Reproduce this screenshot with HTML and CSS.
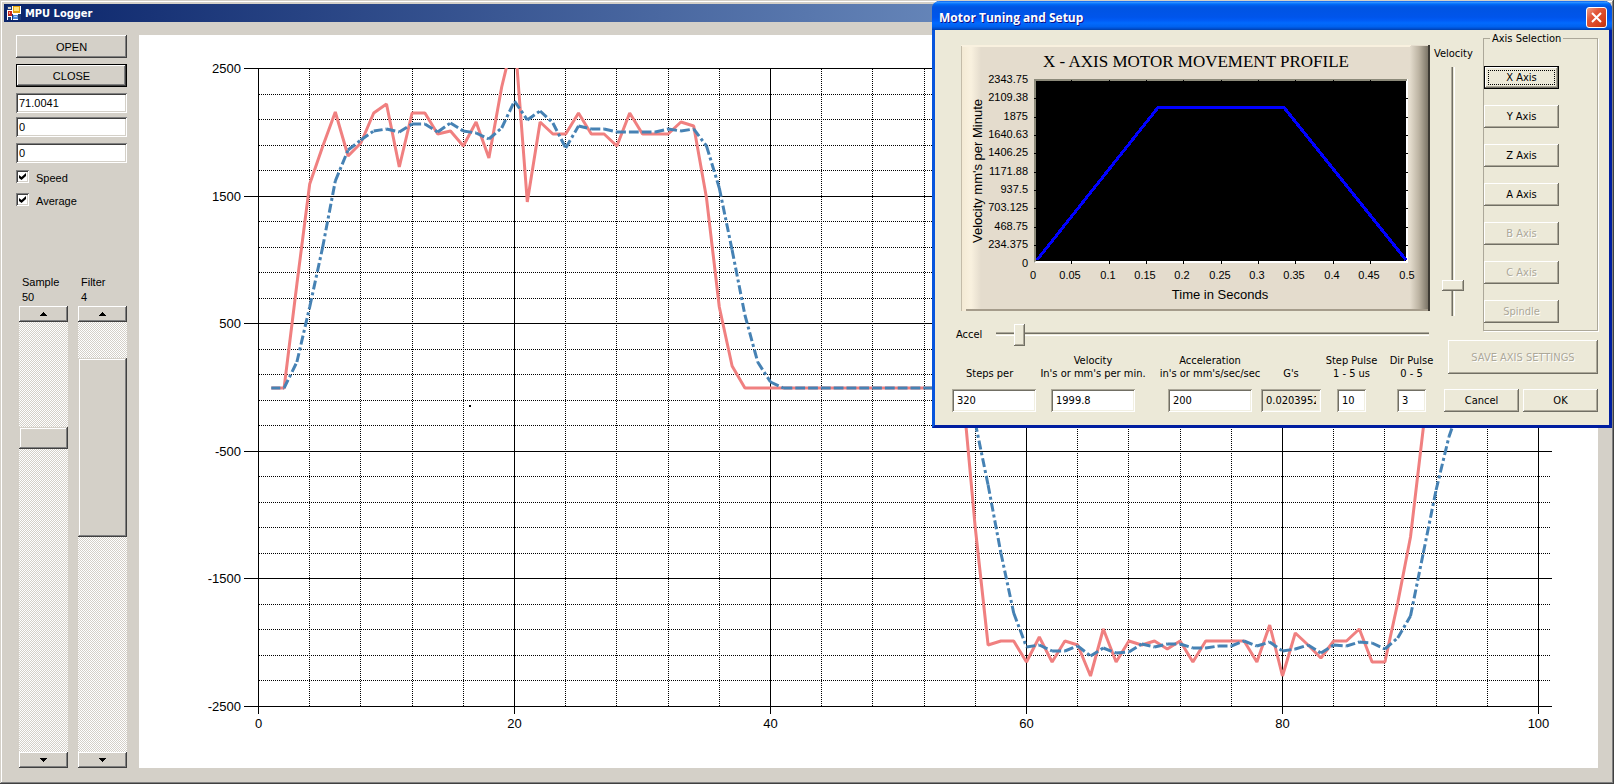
FILE: index.html
```
<!DOCTYPE html>
<html lang="en">
<head>
<meta charset="utf-8">
<title>MPU Logger</title>
<link rel="stylesheet" href="styles.css">
</head>
<body>
<div class="window">
  <header class="titlebar">
    <svg class="app-icon" viewBox="0 0 14 14" aria-hidden="true">
      <rect width="14" height="14" fill="#fff"/>
      <path d="M0 0h5v4H0zM1 11h3v3H1zM11 8h3v6h-3zM5 8h1v6H5z" fill="#1c3a78"/>
      <rect x="1" y="1" width="3" height="2" fill="#d4d0c8"/>
      <rect x="1" y="5" width="4" height="5" fill="#c8281e"/>
      <rect x="2" y="6" width="1" height="2" fill="#f0a08c"/>
      <rect x="6" y="0" width="7" height="7" fill="#e0a010"/>
      <rect x="7" y="1" width="5" height="4" fill="#ffe07a"/>
      <rect x="6" y="9" width="5" height="4" fill="#4a86dc"/>
      <rect x="7" y="10" width="3" height="1" fill="#a8ccf8"/>
    </svg>
    <h1>MPU Logger</h1>
  </header>
  <div class="workspace">
    <aside class="panel">
      <button class="btn" type="button">OPEN</button>
      <button class="btn btn-default" type="button">CLOSE</button>
      <div class="readouts">
        <input class="box" type="text" value="71.0041" aria-label="Reading">
        <input class="box" type="text" value="0" aria-label="Offset">
        <input class="box box-last" type="text" value="0" aria-label="Position">
      </div>
      <label class="check"><input type="checkbox" checked><span>Speed</span></label>
      <label class="check"><input type="checkbox" checked><span>Average</span></label>
      <div class="scrollers">
        <div class="scroller">
          <label for="sample">Sample<br>50</label>
          <button class="arrow" type="button" aria-label="Sample up"><svg viewBox="0 0 7 4"><path d="M3 0h1v1h1v1h1v1h1v1H0V3h1V2h1V1h1z"/></svg></button>
          <input class="scroll scroll-sample" id="sample" type="range" min="0" max="408" value="105">
          <button class="arrow" type="button" aria-label="Sample down"><svg viewBox="0 0 7 4"><path d="M0 0h7v1H6v1H5v1H4v1H3V3H2V2H1V1H0z"/></svg></button>
        </div>
        <div class="scroller">
          <label for="filter">Filter<br>4</label>
          <button class="arrow" type="button" aria-label="Filter up"><svg viewBox="0 0 7 4"><path d="M3 0h1v1h1v1h1v1h1v1H0V3h1V2h1V1h1z"/></svg></button>
          <input class="scroll scroll-filter" id="filter" type="range" min="0" max="251" value="36">
          <button class="arrow" type="button" aria-label="Filter down"><svg viewBox="0 0 7 4"><path d="M0 0h7v1H6v1H5v1H4v1H3V3H2V2H1V1H0z"/></svg></button>
        </div>
      </div>
    </aside>
    <main class="chart-pane">
      <svg class="chart" id="log-chart" viewBox="139 35 1459 733" role="img" aria-label="Speed and average log">
        <defs><clipPath id="plot-area"><rect x="258" y="68" width="1293" height="639"/></clipPath></defs>
        <g class="minor"></g>
        <g class="major"></g>
        <g class="labels"></g>
        <g clip-path="url(#plot-area)">
          <path class="speed"/>
          <path class="average"/>
        </g>
        <rect x="469" y="405" width="2" height="2"/>
      </svg>
    </main>
  </div>
</div>

<section class="dialog" role="dialog" aria-labelledby="dialog-title">
  <header class="dialog-title">
    <h2 id="dialog-title">Motor Tuning and Setup</h2>
    <button class="close" type="button" aria-label="Close dialog"><svg viewBox="0 0 11 11"><path d="M1 1l9 9M10 1l-9 9"/></svg></button>
  </header>
  <div class="dialog-body">
    <div class="tuning">
      <svg class="profile" id="profile-chart" viewBox="961 45 469 266" role="img" aria-label="X axis motor movement profile">
        <defs>
          <linearGradient id="edge-left"><stop offset="0" stop-color="#f3e9d3"/><stop offset=".5" stop-color="#f9f1df"/><stop offset="1" stop-color="#e4dccd"/></linearGradient>
          <linearGradient id="edge-right"><stop offset="0" stop-color="#e4dccd"/><stop offset=".5" stop-color="#bcb3a2"/><stop offset="1" stop-color="#7c7567"/></linearGradient>
        </defs>
        <rect x="961" y="45" width="469" height="266" fill="#e4dccd"/>
        <rect x="961" y="45" width="20" height="266" fill="url(#edge-left)"/>
        <rect x="961" y="45" width="450" height="2" fill="#f9f1df"/>
        <rect x="1410" y="46" width="18" height="265" fill="url(#edge-right)"/>
        <rect x="961" y="46" width="1" height="265" fill="#c4bca9"/>
        <rect x="966" y="309" width="463" height="2" fill="#a59c8b"/>
        <rect x="1428" y="45" width="2" height="266" fill="#3d3a33"/>
        <rect x="1034" y="79" width="374" height="184" fill="#fff"/>
        <path d="M1034 263V79h373v2h-371v180z" fill="#8c8a7a"/>
        <rect x="1036" y="81" width="370" height="180"/>
        <g class="ticks"></g>
        <path class="motion" d="M1037 260L1158 107.5H1284L1406 260"/>
        <text class="profile-title" x="1196" y="67">X - AXIS MOTOR MOVEMENT PROFILE</text>
        <g class="profile-labels"></g>
        <text class="profile-axis" x="1220" y="299">Time in Seconds</text>
        <text class="profile-axis" transform="translate(982 171) rotate(-90)">Velocity mm's per Minute</text>
      </svg>
      <div class="accel">
        <label for="accel">Accel</label>
        <input class="slider" id="accel" type="range" min="0" max="422" value="18">
      </div>
      <div class="fields">
        <div class="field field-start"><label for="steps">Steps per</label><input class="num" id="steps" type="text" value="320"></div>
        <div class="field"><label for="vel">Velocity<br>In's or mm's per min.</label><input class="num" id="vel" type="text" value="1999.8"></div>
        <div class="field"><label for="acc">Acceleration<br>in's or mm's/sec/sec</label><input class="num" id="acc" type="text" value="200"></div>
        <div class="field"><label for="gs">G's</label><input class="num" id="gs" type="text" value="0.0203952" readonly></div>
        <div class="field"><label for="step-pulse">Step Pulse<br>1 - 5 us</label><input class="num" id="step-pulse" type="text" value="10"></div>
        <div class="field"><label for="dir-pulse">Dir Pulse<br>0 - 5</label><input class="num" id="dir-pulse" type="text" value="3"></div>
      </div>
    </div>
    <div class="side">
      <div class="side-top">
        <div class="velocity">
          <label for="velocity">Velocity</label>
          <input class="slider slider-v" id="velocity" type="range" min="0" max="239" value="25">
        </div>
        <fieldset class="axes">
          <legend>Axis Selection</legend>
          <button class="xp xp-focus" type="button">X Axis</button>
          <button class="xp" type="button">Y Axis</button>
          <button class="xp" type="button">Z Axis</button>
          <button class="xp" type="button">A Axis</button>
          <button class="xp" type="button" disabled>B Axis</button>
          <button class="xp" type="button" disabled>C Axis</button>
          <button class="xp" type="button" disabled>Spindle</button>
        </fieldset>
      </div>
      <button class="xp save" type="button" disabled>SAVE AXIS SETTINGS</button>
      <div class="actions">
        <button class="xp" type="button">Cancel</button>
        <button class="xp" type="button">OK</button>
      </div>
    </div>
  </div>
</section>
<script src="charts.js"></script>
</body>
</html>
```

FILE: styles.css
```
* { box-sizing: border-box; }

body {
  margin: 0;
  background: #d4d0c8;
  font-family: "Liberation Sans", Arial, sans-serif;
  font-size: 11px;
  color: #000;
}

button, input { font: inherit; color: inherit; margin: 0; border-radius: 0; }
button { padding: 0; }

/* Main window */
.window {
  display: flex;
  flex-direction: column;
  min-height: 100vh;
  padding: 4px;
  background: #d4d0c8;
  box-shadow: inset -1px -1px #404040, inset 1px 1px #d4d0c8, inset -2px -2px #808080, inset 2px 2px #fff;
}

.titlebar {
  display: flex;
  align-items: center;
  gap: 4px;
  height: 18px;
  padding-left: 3px;
  background: linear-gradient(to right, #0a246a, #a6caf0);
}

.titlebar h1 {
  margin: 0;
  font: bold 11px "DejaVu Sans Condensed", "DejaVu Sans", sans-serif;
  color: #fff;
}

.app-icon { width: 14px; height: 14px; }

.workspace {
  flex: 1;
  display: flex;
  gap: 12px;
  padding: 13px 12px 12px;
}

.panel {
  flex: none;
  display: flex;
  flex-direction: column;
  gap: 6px;
  width: 111px;
}

.btn, .arrow {
  border: 0;
  background: #d4d0c8;
  box-shadow: inset -1px -1px #404040, inset 1px 1px #fff, inset -2px -2px #808080;
}

.btn { height: 23px; }

.btn-default {
  border: 1px solid #000;
}

.readouts { display: flex; flex-direction: column; gap: 4px; margin-bottom: 1px; }

.box {
  width: 100%;
  height: 20px;
  padding: 0 3px;
  border: 0;
  background: #fff;
  box-shadow: inset 1px 1px #808080, inset -1px -1px #fff, inset 2px 2px #404040, inset -2px -2px #d4d0c8;
}

.box-last { margin-top: 2px; }

.check {
  display: flex;
  align-items: flex-start;
  gap: 7px;
  height: 17px;
  line-height: 17px;
}

.check input {
  appearance: none;
  position: relative;
  width: 13px;
  height: 13px;
  background: #fff;
  box-shadow: inset 1px 1px #808080, inset -1px -1px #fff, inset 2px 2px #404040, inset -2px -2px #d4d0c8;
}

.check input:checked::after {
  content: "";
  position: absolute;
  inset: 3px;
  background: #000;
  clip-path: polygon(0 30%, 36% 58%, 100% 0, 100% 43%, 36% 100%, 0 72%);
}

.scrollers { flex: 1; display: flex; gap: 10px; justify-content: flex-end; margin-top: 59px; }

.scroller { width: 49px; display: flex; flex-direction: column; }

.scroller label { padding-left: 3px; line-height: 15px; margin-bottom: 1px; }

.arrow { flex: none; height: 16px; display: grid; place-items: center; }
.arrow svg { width: 7px; height: 4px; }

.scroll {
  appearance: none;
  flex: 1;
  min-height: 0;
  width: 100%;
  writing-mode: vertical-lr;
  background: repeating-conic-gradient(#fff 0 25%, #d4d0c8 0 50%) 0 0 / 2px 2px;
}

.scroll::-webkit-slider-thumb {
  appearance: none;
  width: 49px;
  height: 22px;
  background: #d4d0c8;
  box-shadow: inset -1px -1px #404040, inset 1px 1px #d4d0c8, inset -2px -2px #808080, inset 2px 2px #fff;
}

.scroll-filter::-webkit-slider-thumb { height: 179px; }

.chart-pane { flex: 1; min-width: 0; background: #fff; }

.chart { display: block; width: 100%; }
.minor path { stroke: #000; stroke-dasharray: 1 1; shape-rendering: crispEdges; }
.major path { stroke: #000; shape-rendering: crispEdges; }
.labels text { font-size: 13px; text-anchor: middle; }
.labels .value { text-anchor: end; }
.speed { fill: none; stroke: #f08080; stroke-width: 3; stroke-linejoin: bevel; }
.average { fill: none; stroke: #4682b4; stroke-width: 3; stroke-dasharray: 9 3 3 3; }

/* Motor tuning dialog */
.dialog {
  position: absolute;
  top: 1px;
  right: 2px;
  width: 680px;
  border: solid #0831d9;
  border-width: 0 3px 3px;
  border-color: #0831d9 #001ea0 #001ea0 #0855dd;
  border-radius: 8px 8px 0 0;
  background: #ece9d8;
  font-family: "DejaVu Sans Condensed", "DejaVu Sans", sans-serif;
}

.dialog-title {
  display: flex;
  align-items: center;
  justify-content: space-between;
  height: 29px;
  margin: 0 -3px;
  padding: 3px 5px 0 7px;
  border-radius: 8px 8px 0 0;
  background: linear-gradient(#0058ee 0, #3593ff 4%, #288eff 6%, #127dff 8%, #036ffc 10%, #0262ee 14%, #0057e5 20%, #0054e3 24%, #0055eb 56%, #005bf5 66%, #026afe 76%, #0062ef 88%, #0052d6 94%, #0040ab 100%);
}

.dialog-title h2 {
  margin: 0;
  font: bold 12px "Open Sans", "Noto Sans", sans-serif;
  color: #fff;
  text-shadow: 1px 1px #0f1089;
}

.close {
  display: grid;
  place-items: center;
  width: 21px;
  height: 21px;
  border: 1px solid #fff;
  border-radius: 3px;
  background: linear-gradient(135deg, #f0a088 0, #e2583a 35%, #d8401c 75%, #b83410 100%);
}

.close svg { width: 11px; height: 11px; }
.close path { stroke: #fff; stroke-width: 2; fill: none; }

.dialog-body {
  display: flex;
  justify-content: space-between;
  padding: 8px 11px 13px 17px;
}

.tuning {
  width: 478px;
  display: flex;
  flex-direction: column;
  padding-top: 7px;
}

.profile { display: block; margin-left: 9px; width: 469px; }
.profile-title { font: 17px "Liberation Serif", "Times New Roman", serif; text-anchor: middle; }
.profile-labels text { font: 11px "Liberation Sans", Arial, sans-serif; text-anchor: middle; }
.profile-labels .value { text-anchor: end; }
.profile-axis { font: 13px "Liberation Sans", Arial, sans-serif; text-anchor: middle; }
.motion { fill: none; stroke: #0000ff; stroke-width: 3; shape-rendering: crispEdges; }
.ticks path { stroke: #000; shape-rendering: crispEdges; }

.accel {
  display: flex;
  align-items: center;
  justify-content: space-between;
  height: 23px;
  margin-top: 12px;
  padding: 0 1px 0 4px;
}

.slider {
  appearance: none;
  width: 433px;
  height: 23px;
  background: linear-gradient(#aca899 0 1px, #716f64 1px 2px, #ece9d8 2px 3px, #fff 3px) 0 9px / 100% 4px no-repeat;
}

.slider::-webkit-slider-thumb {
  appearance: none;
  width: 11px;
  height: 22px;
  background: #ece9d8;
  box-shadow: inset -1px -1px #716f64, inset 1px 1px #fff, inset -2px -2px #aca899;
}

.slider-v {
  width: 22px;
  height: 249px;
  writing-mode: vertical-lr;
  direction: rtl;
  background: linear-gradient(to right, #aca899 0 1px, #716f64 1px 2px, #ece9d8 2px 3px, #fff 3px) 9px 0 / 4px 100% no-repeat;
}

.slider-v::-webkit-slider-thumb { width: 22px; height: 11px; }

.fields {
  flex: 1;
  display: flex;
  align-items: flex-end;
  justify-content: space-between;
  padding-right: 4px;
}

.field {
  display: flex;
  flex-direction: column;
  align-items: center;
  gap: 9px;
  width: 84px;
  text-align: center;
  line-height: 13px;
  white-space: nowrap;
}

.field-start { align-items: flex-start; }
.field-start label { padding-left: 14px; }
.field:nth-child(2) { margin-right: 18px; }
.field:nth-child(4) { width: 60px; margin: 0 1px 0 -6px; }
.field:nth-child(n+5) { width: 29px; }
.field:last-child { margin-left: 16px; }

.num {
  width: 100%;
  height: 23px;
  padding: 0 5px;
  border: 0;
  background: #fff;
  box-shadow: inset 1px 1px #aca899, inset -1px -1px #fff, inset 2px 2px #716f64, inset -2px -2px #f1efe2;
}

.num:read-only { background: #ece9d8; }

.side {
  width: 164px;
  display: flex;
  flex-direction: column;
  align-items: flex-end;
}

.side-top { align-self: stretch; display: flex; justify-content: space-between; }

.velocity {
  display: flex;
  flex-direction: column;
  align-items: center;
  gap: 7px;
  padding-top: 9px;
}

.axes {
  display: flex;
  flex-direction: column;
  align-items: flex-start;
  gap: 16px;
  width: 115px;
  min-width: 0;
  height: 299px;
  margin: -6px 0 0;
  padding: 21px 0 0;
  border: 1px solid #aca899;
  box-shadow: 1px 1px #fff;
}

.axes legend { margin-left: 6px; padding: 0 2px; background: #ece9d8; }

.xp {
  width: 75px;
  height: 23px;
  border: 0;
  background: #ece9d8;
  box-shadow: inset -1px -1px #716f64, inset 1px 1px #fff, inset -2px -2px #aca899;
}

.xp:disabled { color: #aca899; text-shadow: 1px 1px #fff; }

.xp-focus {
  border: 1px solid #000;
  outline: 1px dotted #000;
  outline-offset: -5px;
}

.save { width: 150px; height: 34px; margin-top: 9px; }

.actions {
  display: flex;
  justify-content: flex-end;
  gap: 4px;
  margin-top: 15px;
}
```

FILE: charts.js
```
const NS = 'http://www.w3.org/2000/svg';

function add(parent, name, attrs, text) {
  const el = document.createElementNS(NS, name);
  for (const key in attrs) el.setAttribute(key, attrs[key]);
  if (text !== undefined) el.textContent = text;
  parent.appendChild(el);
}

/* Log chart */
const log = document.getElementById('log-chart');
const minor = log.querySelector('.minor');
const major = log.querySelector('.major');
const labels = log.querySelector('.labels');
const px = i => 258.5 + 12.8 * i;

for (let i = 0; i <= 25; i++) {
  const x = Math.round(258 + 51.2 * i) + 0.5;
  if (i % 5) {
    add(minor, 'path', { d: `M${x} 69V706` });
  } else {
    add(major, 'path', { d: `M${x} 68V714` });
    add(labels, 'text', { x, y: 728 }, i * 4);
  }
  const y = Math.round(68 + 25.52 * i) + 0.5;
  if (i % 5) {
    add(minor, 'path', { d: `M259 ${y}H1551` });
  } else {
    add(major, 'path', { d: `M244 ${y}H1552` });
    add(labels, 'text', { x: 241, y: y + 4, class: 'value' }, 2500 - i * 200);
  }
}

const flat = n => Array(n).fill(388);

/* Plot heights of consecutive samples, starting at sample 1 */
const speed = [388, 388, 284, 184, 147, 112, 156, 143, 113, 104, 167, 113, 113, 134, 131, 146, 122, 158, 87, 34,
  202, 122, 134, 134, 113, 134, 134, 146, 113, 134, 134, 134, 122, 126, 198, 307, 366, ...flat(18),
  528, 645, 641, 641, 662, 637, 662, 641, 645, 676, 629, 662, 641, 645, 641, 649, 641, 662, 641, 641, 641, 641,
  662, 625, 676, 633, 645, 658, 641, 641, 629, 662, 662, 603, 537, 428, 320];
const average = [388, 388, 362, 307, 248, 181, 150, 140, 131, 129, 132, 124, 124, 132, 123, 131, 133, 139, 128, 101,
  120, 111, 123, 148, 126, 129, 129, 132, 132, 132, 132, 129, 131, 129, 146, 188, 250, 315, 362, 382, ...flat(15),
  423, 485, 553, 613, 647, 645, 651, 651, 646, 656, 648, 653, 652, 644, 647, 644, 644, 648, 648, 646, 646, 641,
  646, 642, 651, 649, 645, 653, 645, 646, 642, 643, 649, 638, 616, 553, 490, 437, 400];

log.querySelector('.speed').setAttribute('d', 'M' + speed.map((y, i) => `${px(i + 1)} ${y}`).join('L'));

/* Each segment is its own subpath, so the dash pattern restarts at every sample */
log.querySelector('.average').setAttribute('d',
  average.slice(1).map((y, i) => `M${px(i + 1)} ${average[i]}L${px(i + 2)} ${y}`).join(''));

/* Motor profile */
const profile = document.getElementById('profile-chart');
const ticks = profile.querySelector('.ticks');
const profileLabels = profile.querySelector('.profile-labels');
const velocities = ['2343.75', '2109.38', '1875', '1640.63', '1406.25', '1171.88', '937.5', '703.125', '468.75', '234.375', '0'];
const seconds = ['0', '0.05', '0.1', '0.15', '0.2', '0.25', '0.3', '0.35', '0.4', '0.45', '0.5'];

velocities.forEach((v, i) => {
  const y = Math.round(80 + 18.35 * i);
  add(profileLabels, 'text', { x: 1028, y: y + 3, class: 'value' }, v);
  if (i > 0 && i < 10) add(ticks, 'path', { d: `M1034 ${y + 0.5}h2M1406 ${y + 0.5}h2` });
});
seconds.forEach((s, i) => {
  const x = Math.round(1034 + 37.35 * i);
  add(profileLabels, 'text', { x: x - 1, y: 279 }, s);
  if (i > 0 && i < 10) add(ticks, 'path', { d: `M${x + 0.5} 261v3M${x + 0.5} 80v1` });
});
```
